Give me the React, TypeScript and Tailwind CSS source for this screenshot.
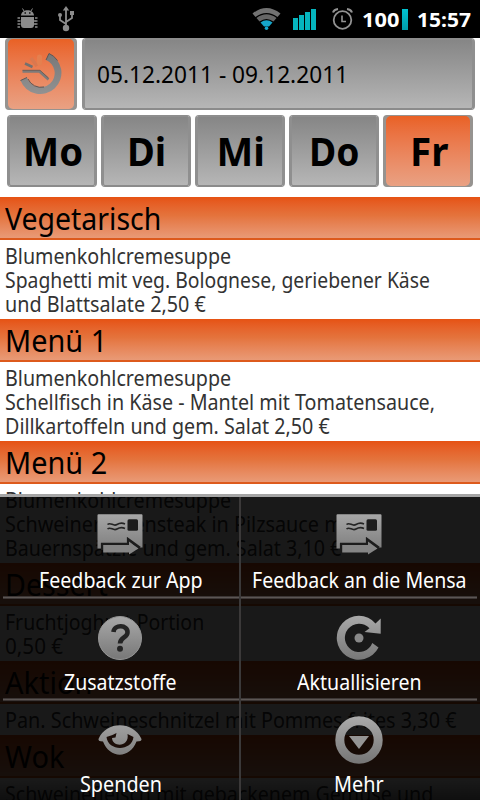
import { useLayoutEffect, useRef, useState, type ReactNode } from "react";

/** Single line of text condensed or stretched to a given advance width. */
function Fit({ w, children }: { w: number; children: string }) {
  const ref = useRef<HTMLSpanElement>(null);
  const [scale, setScale] = useState(1);
  useLayoutEffect(() => {
    if (ref.current) setScale(w / ref.current.offsetWidth);
  }, [w, children]);
  return (
    <span className="block whitespace-nowrap" style={{ width: w }}>
      <span ref={ref} className="inline-block origin-left align-top" style={{ transform: `scaleX(${scale})` }}>
        {children}
      </span>
    </span>
  );
}

type Line = [string, number];
const sections: { title: Line; lines: Line[] }[] = [
  {
    title: ["Vegetarisch", 156.5],
    lines: [
      ["Blumenkohlcremesuppe", 226],
      ["Spaghetti mit veg. Bolognese, geriebener Käse", 425],
      ["und Blattsalate 2,50 €", 200.5],
    ],
  },
  {
    title: ["Menü 1", 102],
    lines: [
      ["Blumenkohlcremesuppe", 226],
      ["Schellfisch in Käse - Mantel mit Tomatensauce,", 430],
      ["Dillkartoffeln und gem. Salat 2,50 €", 324.5],
    ],
  },
  {
    title: ["Menü 2", 102],
    lines: [
      ["Blumenkohlcremesuppe", 226],
      ["Schweinerückensteak in Pilzsauce mit", 350],
      ["Bauernspätzle und gem. Salat 3,10 €", 336],
    ],
  },
  {
    title: ["Dessert", 103],
    lines: [
      ["Fruchtjoghurt Portion", 199.5],
      ["0,50 €", 58],
    ],
  },
  { title: ["Aktion", 87], lines: [["Pan. Schweineschnitzel mit Pommes frites 3,30 €", 451.5]] },
  { title: ["Wok", 59], lines: [["Schweinefleisch mit gebackenem Gemüse und", 428]] },
];

const days: Line[] = [
  ["Mo", 60],
  ["Di", 39],
  ["Mi", 48],
  ["Do", 50.5],
  ["Fr", 38.5],
];

const grayBox =
  "rounded-[4px] border-x-[3px] border-y-2 border-x-[#8f8f8f] border-t-[#8d8d8d] border-b-[#8b8b8b] bg-linear-to-b from-[#868686] to-[#b6b6b6]";
const orangeBox = "rounded-[4px] border-x-[3px] border-y-[1.5px] border-[#969390] bg-[#969390]";
const orangeFill = "rounded-[5px] bg-linear-to-b from-[#e96124] to-[#e9a183]";

function Logo() {
  return (
    <svg width="64" height="68" viewBox="9 40 64 68" fill="none">
      <defs>
        <linearGradient id="lg" x1="0" y1="53" x2="0" y2="95" gradientUnits="userSpaceOnUse">
          <stop stopColor="#777" />
          <stop offset="1" stopColor="#929292" />
        </linearGradient>
      </defs>
      <path d="M49 53.500A21.200 21.200 0 1 1 20.500 80.500L27 77.500A14.200 14.200 0 1 0 46 60Z" fill="url(#lg)" />
      <path d="M46 60L49 53.500Q54 55.500 57.500 60.500M28 79A14.200 14.200 0 0 0 44 87M20.500 80.500L27 77.500" stroke="#5d5655" strokeWidth="1" />
      <path d="M22.500 71.500H39.500L48.500 79.500" stroke="#7d7b7a" strokeWidth="2.600" />
      <path d="M22.500 70.300H40L48.500 78" stroke="#605652" strokeWidth=".8" />
      <path d="M25 63.500L32.500 67" stroke="#74706e" strokeWidth="2.500" />
      <path d="M31 58L37 66" stroke="#d9784f" strokeWidth="3.500" />
      <path d="M39.500 57V63" stroke="#e4804f" strokeWidth="5" strokeLinecap="round" />
    </svg>
  );
}

function StatusBar() {
  return (
    <div className="flex h-[38px] shrink-0 bg-black text-white">
      <svg width="362" height="38" viewBox="0 0 362 38" fill="none" className="shrink-0">
        <g fill="#8c8c8c" stroke="#8c8c8c">
          <path d="M21 15.500C21.500 8.500 33.500 8.500 34 15.500Z" stroke="none" />
          <path d="M24 11L22.500 8.500M31 11L32.500 8.500" strokeWidth="1" />
          <path d="M21 17H34V25Q34 28 31 28H24Q21 28 21 25Z" stroke="none" />
          <path d="M20 18H17.500M20 21H17.500M20 24H17.500M20 27H17.500M35 18H37.500M35 21H37.500M35 24H37.500M35 27H37.500" strokeWidth="1.700" fill="none" />
          <path d="M20.500 21H21.500M20.500 24H21.500M33.500 21H35.500M33.500 24H35.500" strokeWidth="1.500" />
        </g>
        <path d="M24.500 13H26M29 13H30.500" stroke="#111" strokeWidth="1.300" />
        <path d="M66 9V27M66 24L60 20V15M66 22L72 18V13" stroke="#8c8c8c" strokeWidth="1.800" />
        <circle cx="66" cy="28" r="3.200" fill="#8c8c8c" />
        <path d="M62.800 10.500L66 6L69.200 10.500Z" fill="#8c8c8c" />
        <circle cx="60" cy="15" r="2" fill="#8c8c8c" />
        <path d="M70 11H74V15H70Z" fill="#8c8c8c" />
        <path d="M252.500 13.500Q266.500 2.500 280.500 13.500L277.500 17Q266.500 9 255.500 17Z" fill="#727272" />
        <path d="M256.500 18Q266.500 10.500 276.500 18L273.500 21.500Q266.500 16.500 259.500 21.500Z" fill="#666" />
        <path d="M260.500 22.500Q266.500 18 272.500 22.500L269 26.500H264Z" fill="#16a5ca" />
        <circle cx="266.500" cy="28.300" r="1.800" fill="#13a8cf" />
        <path d="M293 18H298V30H293ZM299 15H304V30H299ZM305 12H310V30H305ZM311 9H316V30H311Z" fill="#05b5be" />
        <g stroke="#929292" strokeWidth="1.800">
          <circle cx="342.500" cy="20" r="8.800" />
          <path d="M333 12.500Q334 9.500 338 9M352 12.500Q351 9.500 347 9" strokeWidth="2" />
          <path d="M342 15.500V21.500H346" strokeWidth="1.600" />
        </g>
      </svg>
      <div className="flex pt-[1px] text-[20px] leading-[37px] font-bold">
        <Fit w={37}>100</Fit>
        <span className="mt-2 ml-[3px] h-[21px] w-[6px] bg-linear-to-b from-[#00c2d0] to-[#009dab]" />
        <div className="ml-[9px]">
          <Fit w={53.5}>15:57</Fit>
        </div>
      </div>
    </div>
  );
}

function Icon({ children }: { children: ReactNode }) {
  return (
    <svg width="60" height="60" viewBox="-30 -30 60 60" fill="none" className="shrink-0">
      <defs>
        <linearGradient id="ig" x1="0" y1="-22" x2="0" y2="22" gradientUnits="userSpaceOnUse">
          <stop stopColor="#a9a9a9" />
          <stop offset="1" stopColor="#777" />
        </linearGradient>
      </defs>
      {children}
    </svg>
  );
}

const Mail = () => (
  <Icon>
    <path d="M-21.500-19.700H21.500Q22.500-19.700 22.500-18.700V13.500H19.500L8 5V9.800H-18V14.500H-22.500V-18.700Q-22.500-19.700-21.500-19.700Z" fill="url(#ig)" />
    <path d="M-12.500-9.500C-9-12.500-7-7-3-9.500Q1-12 5-10M-12.500-5C-9-8-7-2.500-3-5Q1-7.500 5-5.500" stroke="#242424" strokeWidth="1.600" />
    <rect x="7.500" y="-14.700" width="10.500" height="11.400" rx="1.500" fill="#1c1c1c" />
    <path d="M-18 16V9.800H8V5L20 13.700" stroke="#1c1c1c" strokeWidth="2.200" />
    <path d="M-16.800 11H9V7.500L18.500 14.500L9 20.500V18.500H-16.800Z" fill="#858585" />
  </Icon>
);

const Help = () => (
  <Icon>
    <circle r="21.500" fill="url(#ig)" stroke="#969696" />
    <path d="M-6.500-6C-6-14 8-13.500 7.500-5.500C7.500-.5 0-.5 0 5.500" stroke="#242424" strokeWidth="4.600" />
    <circle cy="10.800" r="3" fill="#242424" />
  </Icon>
);

const Refresh = () => (
  <Icon>
    <path
      d="M16.500-14.500L21.700-19.500V-4.300L5.500-6L10.500-9.800A14.200 14.200 0 1 0 13.300 5L19.500 9.500A22 22 0 1 1 16.500-14.500Z"
      fill="url(#ig)"
    />
    <circle r="4.500" fill="#898989" />
  </Icon>
);

const Eye = () => (
  <Icon>
    <path d="M-21.500-1C-14-19.500 13.500-19.500 21.500-1Q22 1.500 16.500 1.500C10 19-10.500 19-17 1.500Q-22 1.500-21.500-1Z" fill="url(#ig)" />
    <path d="M-13.500-3C-12 11.500 12 11.500 13.500-3L7.500-6C10 7-7.500 8-8-2L-4.500-2.500L-3.500-7L-7.500-5Z" fill="#1b0d08" />
  </Icon>
);

const More = () => (
  <Icon>
    <circle r="19.200" stroke="url(#ig)" strokeWidth="9" />
    <path d="M-10-4H10L0 9Z" fill="#949494" />
  </Icon>
);

const menu: { label: string; w: number; icon: ReactNode; shift: string }[] = [
  { label: "Feedback zur App", w: 163.5, icon: <Mail />, shift: "pt-[7px]" },
  { label: "Feedback an die Mensa", w: 215, icon: <Mail />, shift: "pt-[7px]" },
  { label: "Zusatzstoffe", w: 112.5, icon: <Help />, shift: "pt-[9px]" },
  { label: "Aktuallisieren", w: 125, icon: <Refresh />, shift: "pt-[9px]" },
  { label: "Spenden", w: 82, icon: <Eye />, shift: "pt-[9px]" },
  { label: "Mehr", w: 50, icon: <More />, shift: "pt-[9px]" },
];

export default function App() {
  return (
    <div className="relative flex h-[800px] w-[480px] flex-col overflow-hidden bg-white font-['Noto_Sans','Open_Sans',sans-serif] text-black">
      <StatusBar />
      <div className="flex h-[72px] shrink-0 gap-[5px] px-[5px]">
        <div className={`flex w-[72px] ${orangeBox}`}>
          <div className={`flex flex-1 items-center justify-center ${orangeFill}`}>
            <Logo />
          </div>
        </div>
        <div className={`flex flex-1 items-center pl-[12px] text-[24px] leading-9 ${grayBox}`}>
          <Fit w={251.5}>05.12.2011 - 09.12.2011</Fit>
        </div>
      </div>
      <div className="mt-[5px] mb-[10px] flex h-[72px] shrink-0 gap-1 px-[7px] text-[39px] leading-[52px] font-bold">
        {days.map(([d, w]) =>
          d === "Fr" ? (
            <div key={d} className={`flex w-[90px] ${orangeBox}`}>
              <div className={`flex flex-1 items-center justify-center pl-[3px] ${orangeFill}`}>
                <Fit w={w}>{d}</Fit>
              </div>
            </div>
          ) : (
            <div key={d} className={`flex w-[90px] items-center justify-center pl-[1px] ${grayBox}`}>
              <Fit w={w}>{d}</Fit>
            </div>
          ),
        )}
      </div>
      {sections.map((s) => (
        <section key={s.title[0]} className="shrink-0">
          <h2 className="h-[43px] border-b-2 border-[#dd5a1c] bg-linear-to-b from-[#e65212] via-[#e4733c] via-45% to-[#e99a76] pl-[5px] text-[30px] leading-[43px]">
            <Fit w={s.title[1]}>{s.title[0]}</Fit>
          </h2>
          <div className="pt-1 pb-[3px] pl-[5px] text-[21px] leading-6 text-[#333]">
            {s.lines.map(([t, w]) => (
              <Fit key={t} w={w}>
                {t}
              </Fit>
            ))}
          </div>
        </section>
      ))}

      <div className="absolute inset-x-0 bottom-0 h-[306px] border-t-[3px] border-[#a5a5a5] bg-black/90 bg-clip-padding text-white">
        <div className="grid grid-cols-[241px_239px] grid-rows-[102px_102px_99px]">
          {menu.map((m, i) => (
            <div
              key={m.label}
              className={`relative flex flex-col items-center overflow-hidden ${m.shift} ${i % 2 === 0 ? "border-r-2 border-[#3b3939] pl-[1px]" : "pr-[3px]"} ${i > 3 ? "bg-linear-to-b from-transparent from-80% to-black/40" : ""}`}
            >
              {m.icon}
              <div className={`text-[21px] leading-6 ${i < 2 ? "mt-[4px]" : "mt-[2px]"} ${i % 2 === 0 ? "pl-[1px]" : ""}`}>
                <Fit w={m.w}>{m.label}</Fit>
              </div>
              {i < 4 && (
                <span
                  className={`absolute bottom-0 h-[3px] border-y border-[#3c3635] bg-[#5c5654] ${i % 2 === 0 ? "right-0 left-[3px]" : "right-[3px] left-0"}`}
                />
              )}
            </div>
          ))}
        </div>
      </div>
      <div className="pointer-events-none absolute inset-x-0 top-[494px] h-[3px] bg-[#a5a5a5]" />
    </div>
  );
}
